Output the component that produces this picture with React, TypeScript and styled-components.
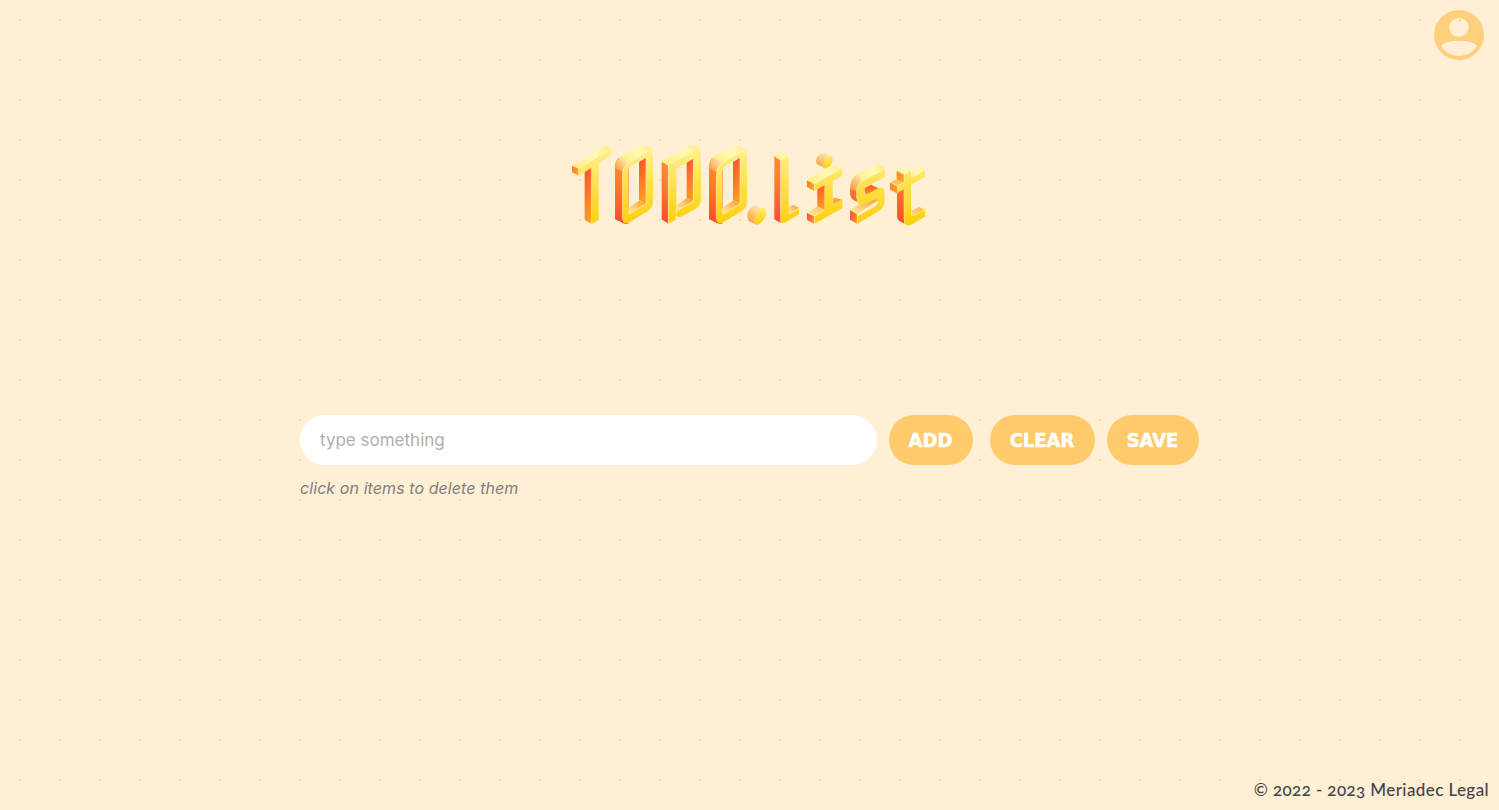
import React from "react";
import styled, { createGlobalStyle } from "styled-components";

const GlobalStyle = createGlobalStyle`
  * { box-sizing: border-box; }
  body {
    margin: 0;
    background-color: #ffefd5;
    background-size: 40px 40px;
    background-image: conic-gradient(from 0deg at 2px 2px, transparent 75%, #ffdb99 0);
    background-position: 19px 19px;
    font-family: Inter, sans-serif;
  }
`;

const Page = styled.div`
  height: 100vh;
  display: flex;
  flex-direction: column;
  overflow: hidden;
`;

const Header = styled.header`
  height: 140px;
  padding: 10px 15px;
  display: flex;
  justify-content: flex-end;
  align-items: flex-start;
`;

const AccountButton = styled.button`
  width: 50px;
  height: 50px;
  padding: 0;
  border: 0;
  background: none;
  svg { display: block; }
`;

const Title = styled.h1`
  margin: 0 auto;
  width: 370px;
  height: 90px;
  svg { display: block; }
`;

const Main = styled.main`
  width: 899px;
  margin: 185px auto 0;
  flex: 1;
`;

const Form = styled.form`
  display: flex;
  height: 50px;
`;

const TextField = styled.input`
  width: 577px;
  height: 50px;
  padding: 0 20px;
  border: 0;
  border-radius: 25px;
  background: #fff;
  font: 400 17px Inter, sans-serif;
  outline: 0;
  &::placeholder { color: #afafaf; opacity: 1; }
`;

const Button = styled.button<{ $width: number; $gap?: number }>`
  width: ${(p) => p.$width}px;
  height: 50px;
  margin-left: ${(p) => p.$gap ?? 12}px;
  padding: 0 1px 1px 0;
  border: 0;
  border-radius: 25px;
  background: #ffca69;
  color: #fff;
  font: 700 20px "DejaVu Sans Condensed", "DejaVu Sans", sans-serif;
  font-stretch: condensed;
  -webkit-text-stroke: 0.5px #fff;
  text-align: center;
`;

const Hint = styled.p`
  margin: 13px 0 0;
  font-size: 16px;
  line-height: 20px;
  font-style: italic;
  letter-spacing: 0.08px;
  color: #80807e;
`;

const Footer = styled.footer`
  padding: 0 10px 8px;
  text-align: right;
  font: 500 17px/24px Lato, sans-serif;
  font-variant-numeric: oldstyle-nums;
  letter-spacing: 0.4px;
  color: #444;
`;

const AccountIcon = () => (
  <svg width="50" height="50" viewBox="0 0 50 50">
    <path
      fill="#ffd07b"
      fillRule="evenodd"
      d="M25 0a25 25 0 1 0 0 50a25 25 0 1 0 0-50zM25 7.7a9.7 9.7 0 1 1 0 19.4a9.7 9.7 0 1 1 0-19.4zM7 36C12 31 18 31 25 31S38 31 43.3 36C39 42.5 32 46 25 46S11 42.5 7 36z"
    />
  </svg>
);

const LetterO = () => (
  <>
    <path fill="url(#side)" d="M150 80Q150 56 170 50L192 66L190 251L178 251L150 238z" />
    <path fill="url(#corner)" d="M150 85Q150 60 172 48L190 58V75L172 96z" />
    <path fill="url(#top)" d="M164 52L222 19Q238 12 258 26L262 30L190 72Q184 58 164 52z" />
    <path
      fill="url(#front)"
      fillRule="evenodd"
      d="M172 105Q172 80 190 68L240 38Q264 24 264 50V184Q264 203 248 214L194 246Q172 257 172 234zM190 96V222L243 192V52L200 77Q190 83 190 96z"
    />
    <path fill="url(#stem)" d="M222 66L243 53V192L222 181z" />
    <path fill="url(#floor)" d="M190 204L222 182L243 192L190 222z" />
    <path className="edge" d="M172 238V106Q172 82 190 69L240 39Q256 31 260 37M190 223L243 192V54" />
  </>
);

const Logo = () => (
  <svg width="370" height="90" viewBox="0 0 1110 270" role="img" aria-label="TODO.list">
    <defs>
      <linearGradient id="front" gradientUnits="userSpaceOnUse" x1="0" y1="30" x2="0" y2="250">
        <stop stopColor="#fff08a" />
        <stop offset="1" stopColor="#ffcf0b" />
      </linearGradient>
      <linearGradient id="dot" x1="0" y1="0" x2="0" y2="1">
        <stop stopColor="#ffeb6c" />
        <stop offset="1" stopColor="#ffcf0b" />
      </linearGradient>
      <linearGradient id="side" gradientUnits="userSpaceOnUse" x1="0" y1="60" x2="0" y2="245">
        <stop stopColor="#ff8b2a" />
        <stop offset="0.4" stopColor="#ff7c2a" />
        <stop offset="1" stopColor="#ff4c2b" />
      </linearGradient>
      <linearGradient id="stem" x1="0" y1="0" x2="0.2" y2="1">
        <stop stopColor="#ff4f2c" />
        <stop offset="1" stopColor="#ff9b22" />
      </linearGradient>
      <linearGradient id="top" x1="0" y1="0.6" x2="1" y2="0.4">
        <stop stopColor="#ffee80" />
        <stop offset="0.6" stopColor="#fffab9" />
        <stop offset="1" stopColor="#ffee84" />
      </linearGradient>
      <linearGradient id="corner" x1="0" y1="1" x2="0.8" y2="0">
        <stop stopColor="#ff9230" />
        <stop offset="1" stopColor="#fff3bd" />
      </linearGradient>
      <linearGradient id="floor" x1="0" y1="1" x2="1" y2="0">
        <stop stopColor="#fff0a8" />
        <stop offset="1" stopColor="#ff9924" />
      </linearGradient>
      <linearGradient id="end" x1="0" y1="0" x2="1" y2="0.6">
        <stop stopColor="#ff7a28" />
        <stop offset="1" stopColor="#ffa51e" />
      </linearGradient>
      <linearGradient id="foot" x1="0" y1="0" x2="1" y2="0.6">
        <stop stopColor="#ff4f2c" />
        <stop offset="1" stopColor="#ff8a26" />
      </linearGradient>
    </defs>
    <style>{`.edge{fill:none;stroke:#fffbe0;stroke-width:2;stroke-linejoin:round;opacity:.75}`}</style>
    <g>
      <path fill="url(#stem)" d="M59 92L80 82V251L59 240z" />
      <path fill="url(#top)" d="M21 77L122 16L139 25L41 87z" />
      <path fill="url(#end)" d="M21 77L41 86V107L21 97z" />
      <path fill="url(#front)" d="M41 86L139 25V46L101 69V239L80 251V83L41 107z" />
      <path className="edge" d="M41 106V86L136 27M80 250V84" />
    </g>
    <LetterO />
    <g transform="translate(270)">
      <path fill="url(#side)" d="M20 64L40 76V251L20 238z" />
      <path fill="url(#top)" d="M20 64L98 18Q114 11 130 23L136 31L40 76z" />
      <path
        fill="url(#front)"
        fillRule="evenodd"
        d="M40 76L114 32Q138 20 138 47V176Q138 196 120 208L82 229Q68 234 62 226V239L40 251zM64 87V212L115 184V57z"
      />
      <path fill="url(#stem)" d="M95 68L115 56V184L95 174z" />
      <path fill="url(#floor)" d="M64 197L95 174L115 184L64 212z" />
      <path className="edge" d="M20 64L40 76V250M40 76L114 33M64 224V214L115 184V58" />
    </g>
    <g transform="translate(282)">
      <LetterO />
    </g>
    <g transform="translate(540)">
      <path fill="url(#corner)" d="M7 226C7 210 22 192 37 197L60 206L34 254L14 244Q7 240 7 226z" />
      <path fill="url(#dot)" d="M28 241C28 222 43 204 55 205Q63 206 63 218C63 236 47 254 36 254Q28 254 28 241z" />
      <path fill="url(#side)" d="M88 48L107 60V249L88 238z" />
      <path fill="url(#top)" d="M88 48L111 35L132 46L107 60z" />
      <path fill="url(#floor)" d="M131 202L145 194L162 204L131 222z" />
      <path fill="url(#front)" d="M107 60L131 47V222L162 204V223L123 246Q107 254 107 240z" />
      <path className="edge" d="M88 48L107 60V246M107 60L131 47M133 222L161 206" />
      <path fill="url(#corner)" d="M213 63C213 50 229 36 240 39L260 49L241 85L220 75Q213 72 213 63z" />
      <path fill="url(#dot)" d="M235 75C235 61 248 47 257 48Q263 49 263 58C263 71 251 86 242 86Q235 85 235 75z" />
      <path fill="url(#stem)" d="M217 146L239 134V210L217 200z" />
      <path fill="url(#floor)" d="M186 218L217 199L239 209L208 230zM263 177L270 173L293 180L263 194z" />
      <path fill="url(#top)" d="M186 120L256 77L291 86L208 132z" />
      <path fill="url(#end)" d="M186 120L208 131V153L186 141z" />
      <path fill="url(#foot)" d="M186 218L208 229V251L186 240z" />
      <path fill="url(#front)" d="M208 132L292 84V107L263 124V195L292 179V205L208 251V229L239 210V135L208 153z" />
      <path className="edge" d="M186 120L208 132V152M208 132L289 86M186 218L208 229V250M208 229L238 211" />
    </g>
    <g transform="translate(825)">
      <path fill="url(#side)" d="M30 140L52 137L60 188L42 181Q30 176 30 155z" />
      <path fill="url(#corner)" d="M30 147Q30 116 52 102L80 105L50 153z" />
      <path fill="url(#top)" d="M50 103L113 71L135 82V91L63 132Q65 110 50 103z" />
      <path fill="url(#stem)" d="M72 144L93 134L119 146L77 168z" />
      <path fill="url(#floor)" d="M30 210L95 171L115 180L52 222z" />
      <path fill="url(#foot)" d="M30 210L52 221V251L30 239z" />
      <path
        fill="url(#front)"
        d="M135 87V110L79 141Q72 145 72 156Q72 166 82 162L116 144Q134 137 134 158V179Q134 201 118 212L52 251V228L106 198Q113 194 113 183Q113 176 103 179L69 193Q50 199 50 174V154Q50 133 68 122z"
      />
      <path className="edge" d="M135 88L68 123Q50 135 50 155V176M30 210L52 222V249M54 227L106 198Q113 194 113 183" />
      <path fill="url(#side)" d="M171 157L193 145V251L176 241Q171 238 171 226z" />
      <path fill="url(#top)" d="M170 92L190 80L213 92L192 104z" />
      <path fill="url(#end)" d="M170 92L192 103V128L170 118zM150 127L171 138V160L150 149z" />
      <path fill="url(#floor)" d="M150 127L170 117L192 128L171 139zM214 213L237 200L255 210L218 229z" />
      <path fill="url(#top)" d="M212 110Q224 84 240 77L255 86V93L213 126z" />
      <path
        fill="url(#front)"
        d="M192 104L213 92V116L255 92V110L213 134V218Q213 230 223 226L255 208V230L216 253Q192 264 192 237V148L171 160V138L192 127z"
      />
      <path className="edge" d="M170 92L192 104V127L171 138L150 127M192 104L212 93M192 149V240M216 115Q226 94 253 90M221 227L255 209" />
    </g>
  </svg>
);

export default function App() {
  return (
    <>
      <GlobalStyle />
      <Page>
        <Header>
          <AccountButton aria-label="Account">
            <AccountIcon />
          </AccountButton>
        </Header>
        <Title>
          <Logo />
        </Title>
        <Main>
          <Form onSubmit={(e) => e.preventDefault()}>
            <TextField placeholder="type something" />
            <Button $width={84}>ADD</Button>
            <Button $width={105} $gap={17}>CLEAR</Button>
            <Button $width={92}>SAVE</Button>
          </Form>
          <Hint>click on items to delete them</Hint>
        </Main>
        <Footer>© 2022 - 2023 Meriadec Legal</Footer>
      </Page>
    </>
  );
}
